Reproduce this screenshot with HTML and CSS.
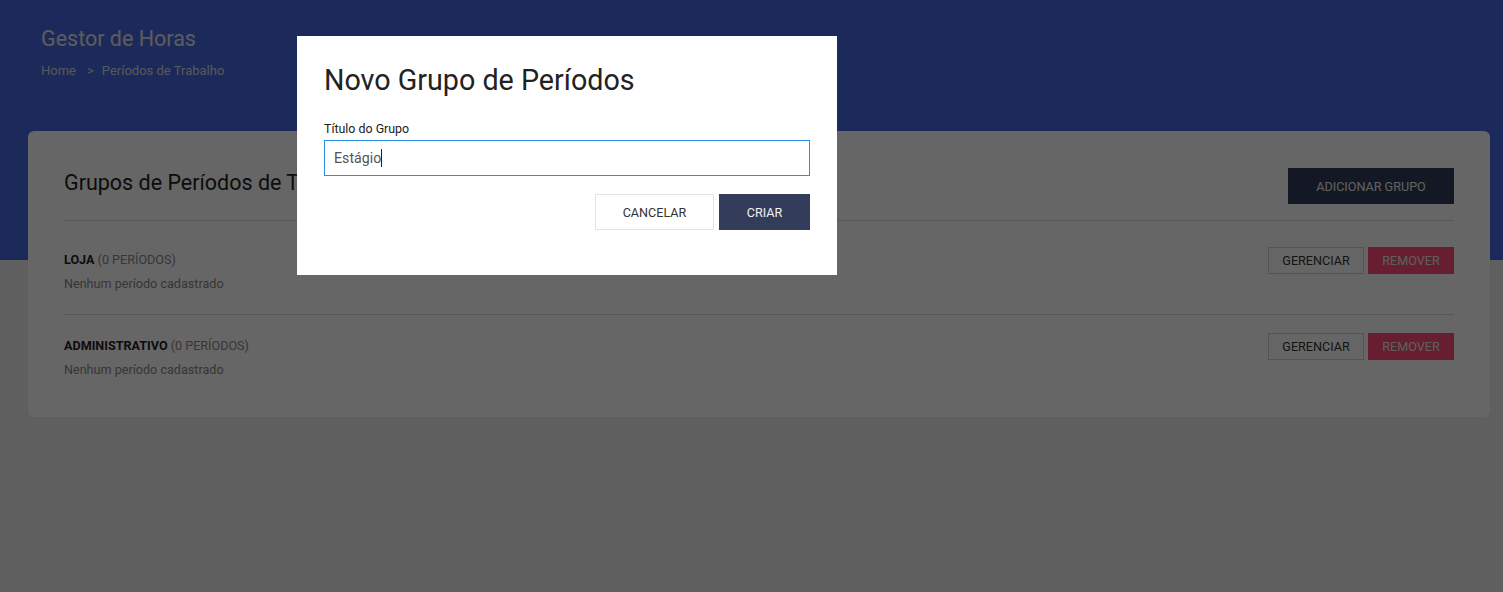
FILE: index.html
```html
<!DOCTYPE html>
<html lang="pt-BR">
<head>
<meta charset="utf-8">
<title>Gestor de Horas</title>
<link rel="stylesheet" href="styles.css">
</head>
<body>
<header class="top">
  <h1 class="app-title">Gestor de Horas</h1>
  <nav class="crumbs"><span>Home</span><span class="sep">&gt;</span><span>Períodos de Trabalho</span></nav>
</header>
<main class="card">
  <div class="card-head">
    <h2 class="card-title">Grupos de Períodos de Trabalho</h2>
    <button class="btn btn-dark btn-lg">ADICIONAR GRUPO</button>
  </div>
  <div class="list">
    <div class="row">
      <div class="row-info">
        <div class="row-name"><b>LOJA</b> <span class="count">(0 PERÍODOS)</span></div>
        <div class="row-empty">Nenhum período cadastrado</div>
      </div>
      <div class="row-actions">
        <button class="btn btn-outline btn-sm">GERENCIAR</button>
        <button class="btn btn-danger btn-sm">REMOVER</button>
      </div>
    </div>
    <div class="row">
      <div class="row-info">
        <div class="row-name"><b>ADMINISTRATIVO</b> <span class="count">(0 PERÍODOS)</span></div>
        <div class="row-empty">Nenhum período cadastrado</div>
      </div>
      <div class="row-actions">
        <button class="btn btn-outline btn-sm">GERENCIAR</button>
        <button class="btn btn-danger btn-sm">REMOVER</button>
      </div>
    </div>
  </div>
</main>
<div class="backdrop"></div>
<div class="modal">
  <h3 class="modal-title">Novo Grupo de Períodos</h3>
  <label class="field-label" for="titulo">Título do Grupo</label>
  <div class="field"><span class="field-value">Estágio</span><span class="caret"></span></div>
  <div class="modal-actions">
    <button class="btn btn-light btn-lg btn-cancel">CANCELAR</button>
    <button class="btn btn-dark btn-lg btn-create">CRIAR</button>
  </div>
</div>
</body>
</html>
```

FILE: styles.css
```css
* { box-sizing: border-box; }
html, body { margin: 0; }
body {
  font-family: Roboto, "Liberation Sans", sans-serif;
  background: linear-gradient(#4669e4 0, #4669e4 260px, #eeeeee 260px);
  min-height: 592px;
  color: #222;
}
.top {
  padding: 27px 41px 0;
  height: 131px;
}
.app-title {
  margin: 0;
  font-size: 21.5px;
  line-height: 24px;
  font-weight: 400;
  color: #e6e6e6;
}
.crumbs {
  margin-top: 12px;
  font-size: 13px;
  line-height: 16px;
  color: #dcdcdc;
  display: flex;
}
.crumbs .sep { margin: 0 8px 0 11px; }
.card {
  margin: 0 13px 0 28px;
  background: #fff;
  border-radius: 6px;
  padding: 37px 36px 17px;
}
.card-head {
  display: flex;
  align-items: center;
  justify-content: space-between;
  padding-bottom: 16px;
  border-bottom: 1px solid #dadada;
}
.card-title {
  margin: 0;
  font-size: 21.5px;
  font-weight: 400;
  line-height: 28px;
  color: #222;
  position: relative;
  top: -3px;
}
.btn {
  font-family: Roboto, "Liberation Sans", sans-serif;
  font-size: 12.6px;
  border: 0;
  border-radius: 0;
  cursor: pointer;
  letter-spacing: 0;
}
.btn-lg { height: 36px; padding: 0 28px; }
.btn-sm { height: 27px; padding: 0 14px; }
.btn-dark { background: #333d5b; color: #f2f2f2; }
.btn-light { background: #fff; color: #333; border: 1px solid #e3e3e3; }
.btn-outline { background: #fff; color: #333; border: 1px solid #d3d3d3; }
.btn-danger { background: #ff4b78; color: #eeeeee; }
.card-head .btn-lg { width: 166px; padding: 0; }
.list { padding-top: 8px; }
.row {
  display: flex;
  justify-content: space-between;
  align-items: flex-start;
  padding: 23px 0 22px;
}
.row + .row { border-top: 1px solid #dadada; }
.row-name { font-size: 12.6px; line-height: 16px; color: #222; }
.row-name b { font-weight: 700; }
.count { color: #888; }
.row-empty { margin-top: 8px; font-size: 12.6px; line-height: 16px; color: #888; }
.row-actions { display: flex; gap: 4px; margin-top: -5px; }
.row-actions .btn-outline { width: 96px; padding: 0; }
.row-actions .btn-danger { width: 86px; padding: 0; }
.backdrop {
  position: fixed;
  inset: 0;
  background: rgba(0, 0, 0, 0.6);
}
.modal {
  position: fixed;
  left: 297px;
  top: 36px;
  width: 540px;
  height: 239px;
  background: #fff;
  padding: 27px;
}
.modal-title {
  margin: 0;
  font-size: 28.7px;
  line-height: 34px;
  font-weight: 400;
  color: #222;
}
.field-label {
  display: block;
  margin-top: 25px;
  font-size: 12.4px;
  line-height: 14px;
  color: #222;
}
.field {
  margin-top: 4px;
  height: 36px;
  border: 1px solid #2a8fe6;
  display: flex;
  align-items: center;
  padding-left: 9px;
  font-size: 14.2px;
  color: #555;
}
.caret { width: 1px; height: 18px; background: #222; margin-left: 0; }
.modal-actions {
  margin-top: 18px;
  display: flex;
  justify-content: flex-end;
  gap: 5px;
}
.btn-cancel { width: 119px; padding: 0; }
.btn-create { width: 91px; padding: 0; }
```
